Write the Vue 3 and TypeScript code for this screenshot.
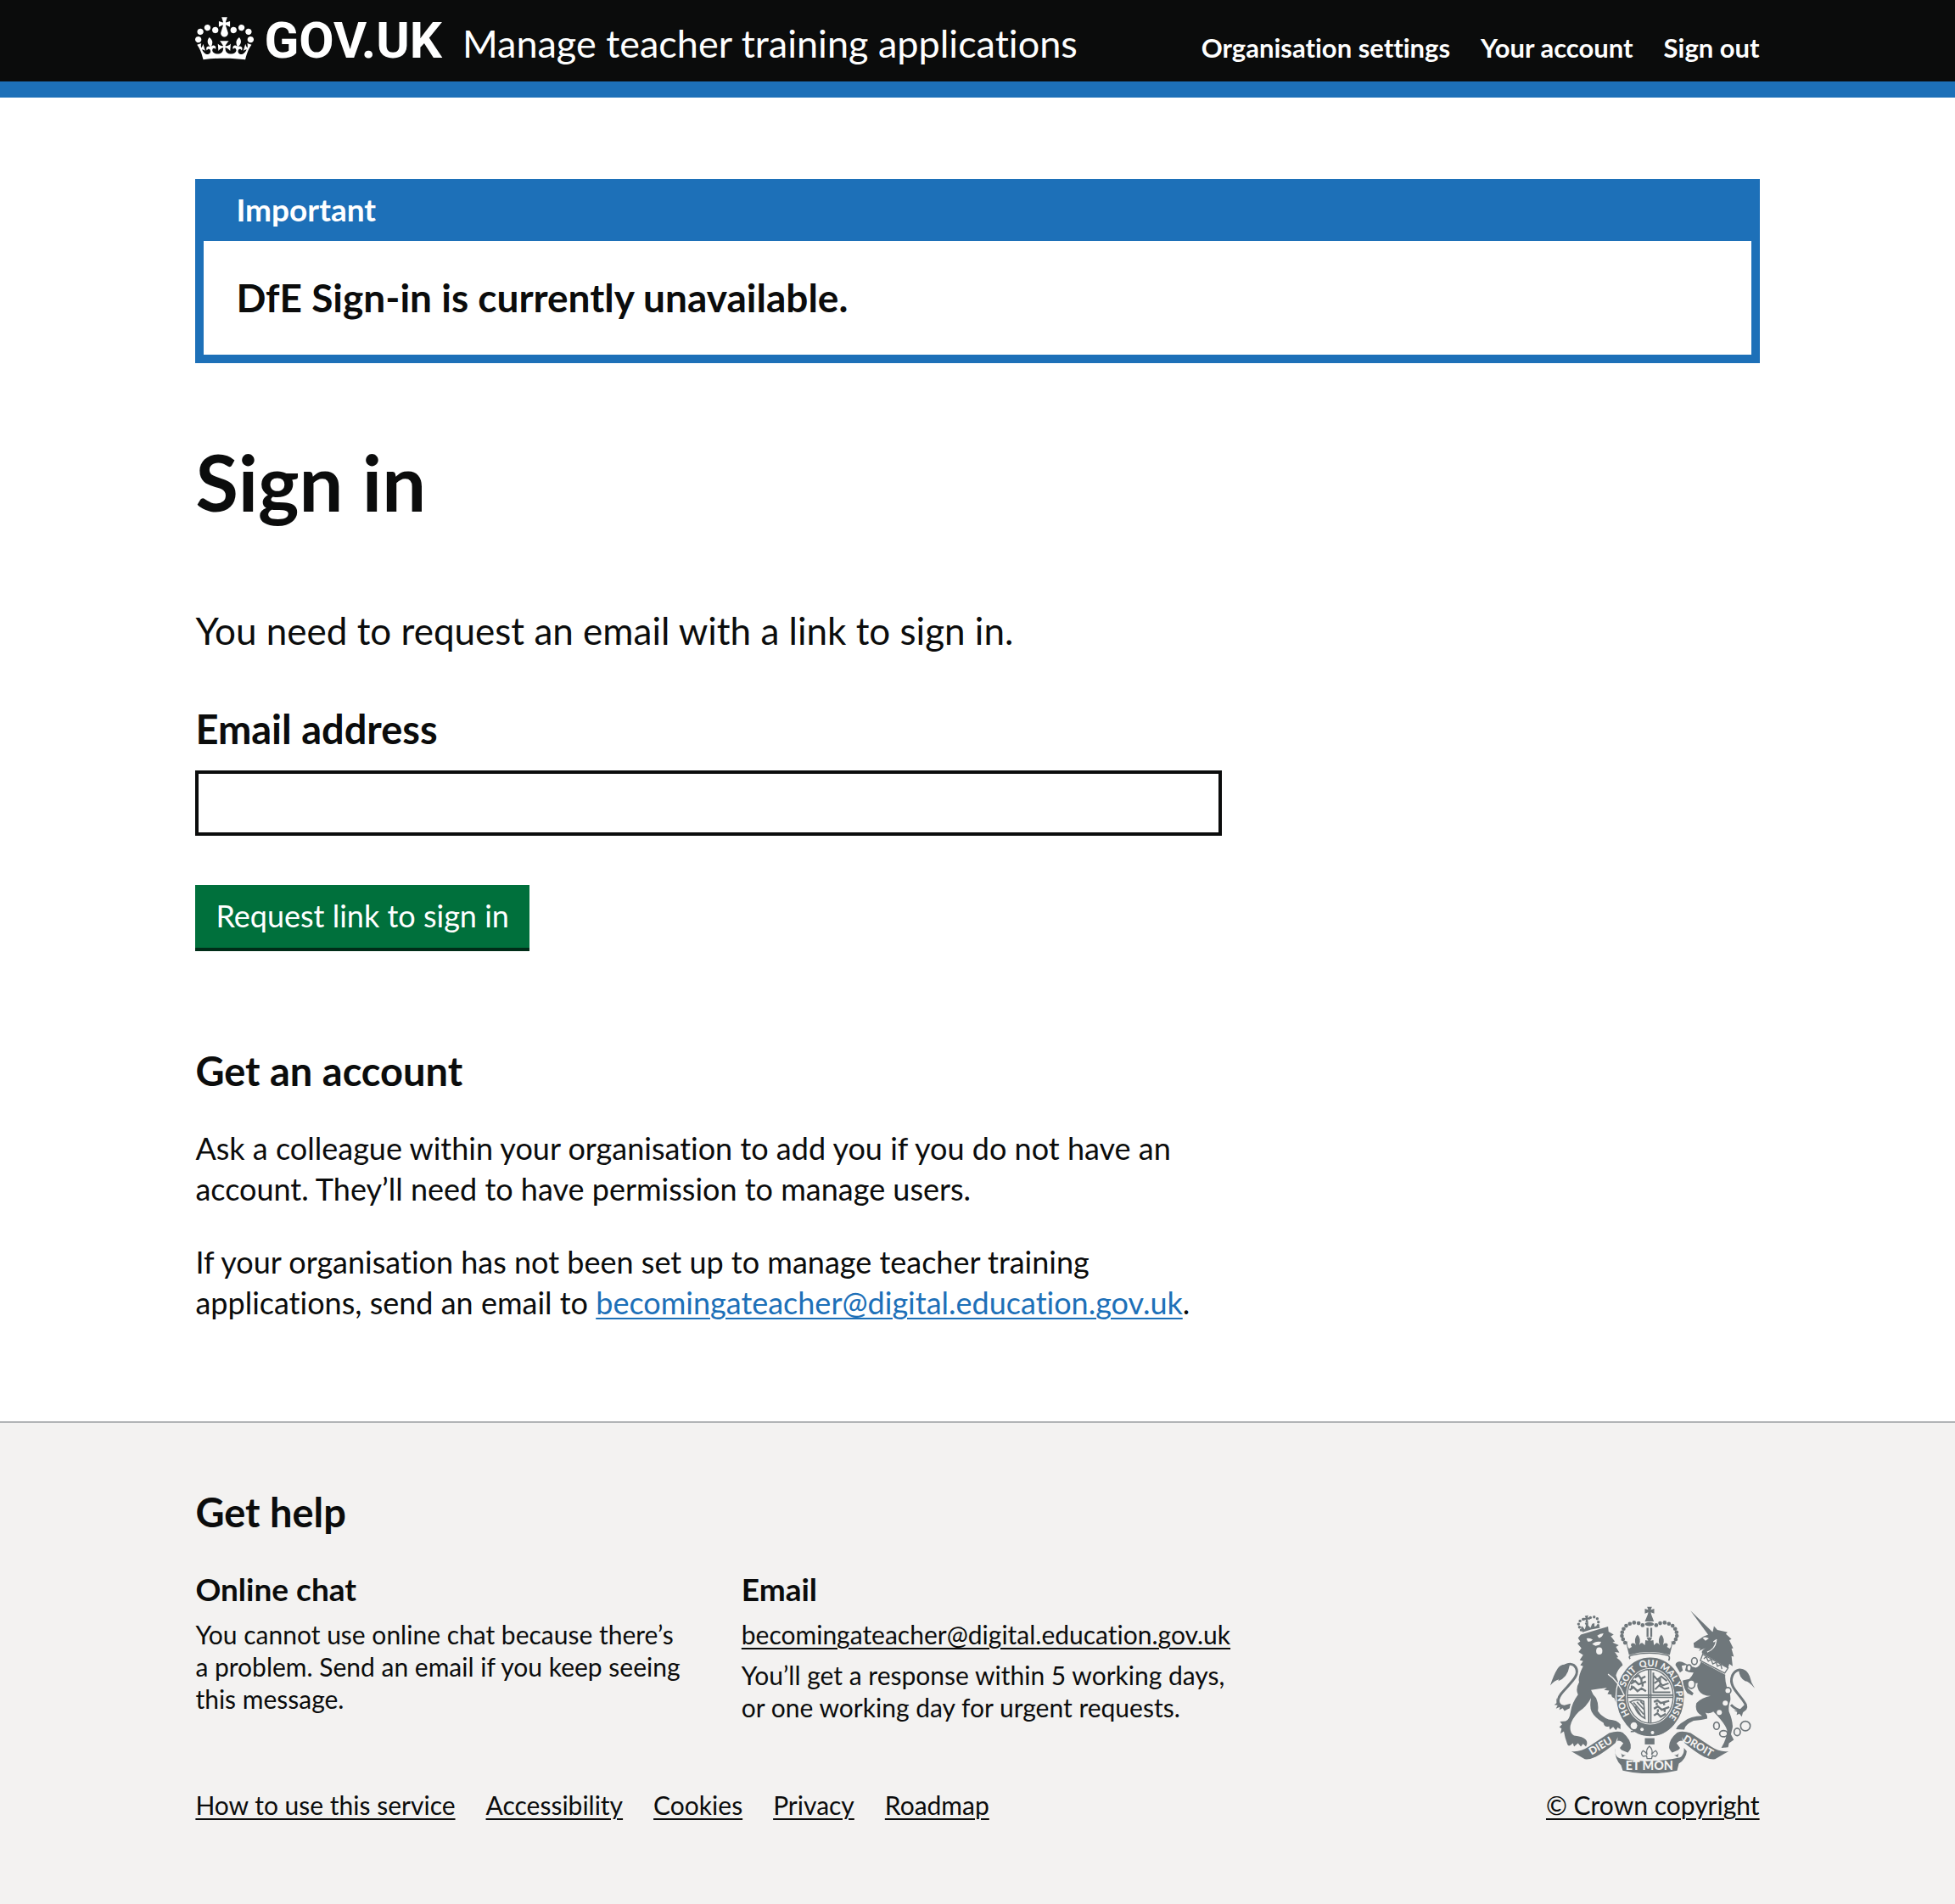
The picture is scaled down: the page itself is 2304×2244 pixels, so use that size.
<script setup lang="ts">
import { ref } from 'vue'

interface Bead {
  x: number
  y: number
}

const email = ref('')
const contact = 'becomingateacher@digital.education.gov.uk'
const navLinks: string[] = ['Organisation settings', 'Your account', 'Sign out']
const metaLinks: string[] = ['How to use this service', 'Accessibility', 'Cookies', 'Privacy', 'Roadmap']

// Pearls along the left arch of the imperial crown; the right arch mirrors them.
const arch: Bead[] = [
  { x: 350, y: 95 }, { x: 336, y: 88 }, { x: 320, y: 86 }, { x: 305, y: 90 }, { x: 292, y: 97 },
  { x: 283, y: 108 }, { x: 278, y: 120 }, { x: 277, y: 133 }, { x: 281, y: 145 }, { x: 288, y: 157 },
]
const pearls: Bead[] = arch.concat(arch.map((b) => ({ x: 748 - b.x, y: b.y })))
const lionPearls: Bead[] = [
  { x: 140, y: 74 }, { x: 129, y: 80 }, { x: 124, y: 91 }, { x: 127, y: 102 }, { x: 133, y: 112 },
  { x: 166, y: 68 }, { x: 179, y: 66 }, { x: 190, y: 72 }, { x: 194, y: 84 }, { x: 193, y: 96 },
]
</script>

<template>
  <div class="page">
    <header class="header">
      <div class="wrap header-row">
        <a href="#" class="logo" aria-label="GOV.UK">
          <svg class="crown" viewBox="0 0 132 97" aria-hidden="true">
            <path fill="currentColor" fill-rule="evenodd" d="M25 30.2c3.5 1.5 7.7-.2 9.1-3.7 1.5-3.6-.2-7.8-3.9-9.2-3.6-1.4-7.6.3-9.1 3.9-1.4 3.5.3 7.5 3.9 9zM9 39.5c3.6 1.5 7.8-.2 9.2-3.7 1.5-3.6-.2-7.8-3.9-9.1-3.6-1.5-7.6.2-9.1 3.8-1.4 3.5.3 7.5 3.8 9zM4.4 57.2c3.5 1.5 7.7-.2 9.1-3.8 1.5-3.6-.2-7.7-3.9-9.1-3.5-1.5-7.6.3-9.1 3.8-1.4 3.5.3 7.6 3.9 9.1zm38.3-21.4c3.5 1.5 7.7-.2 9.1-3.8 1.5-3.6-.2-7.7-3.9-9.1-3.6-1.5-7.6.3-9.1 3.8-1.3 3.6.4 7.7 3.9 9.1zm64.4-5.6c-3.6 1.5-7.8-.2-9.1-3.7-1.5-3.6.2-7.8 3.8-9.2 3.6-1.4 7.7.3 9.2 3.9 1.3 3.5-.4 7.5-3.9 9zm15.9 9.3c-3.6 1.5-7.7-.2-9.1-3.7-1.5-3.6.2-7.8 3.7-9.1 3.6-1.5 7.7.2 9.2 3.8 1.5 3.5-.3 7.5-3.8 9zm4.7 17.7c-3.6 1.5-7.8-.2-9.2-3.8-1.5-3.6.2-7.7 3.9-9.1 3.6-1.5 7.7.3 9.2 3.8 1.3 3.5-.4 7.6-3.9 9.1zM89.3 35.8c-3.6 1.5-7.8-.2-9.2-3.8-1.4-3.6.2-7.7 3.9-9.1 3.6-1.5 7.7.3 9.2 3.8 1.4 3.6-.3 7.7-3.9 9.1zM69.7 17.7l8.9 4.7V9.3l-8.9 2.8c-.2-.3-.5-.6-.9-.9L72.4 0H59.6l3.5 11.2c-.3.3-.6.5-.9.9l-8.8-2.8v13.1l8.8-4.7c.3.3.6.7.9.9l-5 15.4v.1c-.2.8-.4 1.6-.4 2.4 0 4.1 3.1 7.5 7 8.1h.2c.3 0 .7.1 1 .1.4 0 .7 0 1-.1h.2c4-.6 7.1-4.1 7.1-8.1 0-.8-.1-1.7-.4-2.4V34l-5.1-15.4c.4-.2.7-.6 1-.9zM66 92.8c16.9 0 32.8 1.1 47.1 3.2 4-16.9 8.9-26.7 14-33.5l-9.6-3.4c1 4.9 1.1 7.2 0 10.2-1.5-1.4-3-4.3-4.2-8.7L108.6 76c2.8-2 5-3.2 7.5-3.3-4.4 9.4-10 11.9-13.6 11.2-4.3-.8-6.3-4.6-5.6-7.9 1-4.7 5.7-5.9 8-.5 4.3-8.7-3-11.4-7.6-8.8 7.1-7.2 7.9-13.5 2.1-21.1-8 6.1-8.1 12.3-4.5 20.8-4.7-5.4-12.1-2.5-9.5 6.2 3.4-5.2 7.9-2 7.2 3.1-.6 4.3-6.4 7.8-13.5 7.2-10.3-.9-10.9-8-11.2-13.8 2.5-.5 7.1 1.8 11 7.3L80.2 60c-4.1 4.4-8 5.3-12.3 5.4 1.4-4.4 8-11.6 8-11.6H55.5s6.4 7.2 7.9 11.6c-4.2-.1-8-1-12.3-5.4l1.4 16.4c3.9-5.5 8.5-7.7 10.9-7.3-.3 5.8-.9 12.8-11.1 13.8-7.2.6-12.9-2.9-13.5-7.2-.7-5 3.8-8.3 7.1-3.1 2.7-8.7-4.6-11.6-9.4-6.2 3.7-8.5 3.6-14.7-4.6-20.8-5.8 7.6-5 13.9 2.2 21.1-4.7-2.6-11.9.1-7.7 8.8 2.3-5.5 7.1-4.2 8.1.5.7 3.3-1.3 7.1-5.7 7.9-3.5.7-9-1.8-13.5-11.2 2.5.1 4.7 1.3 7.5 3.3l-4.7-15.4c-1.2 4.4-2.7 7.2-4.3 8.7-1.1-3-.9-5.3 0-10.2l-9.5 3.4c5 6.9 9.9 16.7 14 33.5 14.8-2.1 30.8-3.2 47.7-3.2z" />
          </svg>
          <span class="logo-text">GOV.UK</span>
        </a>
        <a href="#" class="service">Manage teacher training applications</a>
        <nav class="nav" aria-label="Account">
          <a v-for="link in navLinks" :key="link" href="#">{{ link }}</a>
        </nav>
      </div>
    </header>

    <main class="wrap main">
      <section class="banner" aria-labelledby="banner-title">
        <h2 id="banner-title" class="banner-title">Important</h2>
        <p class="banner-body">DfE Sign-in is currently unavailable.</p>
      </section>

      <div class="grid">
        <div class="two-thirds">
          <h1 class="title">Sign in</h1>
          <form @submit.prevent>
            <p class="lead">You need to request an email with a link to sign in.</p>
            <label class="label" for="email">Email address</label>
            <input id="email" v-model="email" class="input" type="email" autocomplete="email" />
            <button class="button" type="submit">Request link to sign in</button>
          </form>
          <h2 class="heading">Get an account</h2>
          <p class="body">
            Ask a colleague within your organisation to add you if you do not have an account. They’ll need to have
            permission to manage users.
          </p>
          <p class="body">
            If your organisation has not been set up to manage teacher training applications, send an email to
            <a href="#" class="link">{{ contact }}</a>.
          </p>
        </div>
      </div>
    </main>

    <footer class="footer">
      <div class="wrap footer-row">
        <div class="footer-main">
          <h2 class="heading">Get help</h2>
          <div class="help">
            <section>
              <h3 class="help-title">Online chat</h3>
              <p class="small">You cannot use online chat because there’s a problem. Send an email if you keep seeing this message.</p>
            </section>
            <section>
              <h3 class="help-title">Email</h3>
              <p class="small"><a href="#">{{ contact }}</a></p>
              <p class="small">You’ll get a response within 5 working days, or one working day for urgent requests.</p>
            </section>
          </div>
          <nav class="meta" aria-label="Support links">
            <a v-for="link in metaLinks" :key="link" href="#">{{ link }}</a>
          </nav>
        </div>
        <a href="#" class="copyright">
          <svg class="arms" viewBox="24 28 722 590" aria-hidden="true">
            <g class="ink">
              <!-- lion -->
              <path d="M122 140L132 128L200 108L228 100L230 118L248 128L238 134L252 152L244 156L266 166L256 172L268 192L252 190L264 208L258 210Q276 222 280 236Q262 250 256 272L262 290Q280 320 290 345Q288 362 282 372L274 362L272 374L262 360L256 368L250 352Q240 350 240 340L226 338L232 326L214 324L224 316Q200 318 168 324Q174 342 186 352Q196 375 192 398Q205 418 230 428Q262 430 272 446L272 462L262 456L256 466L246 454L234 464L232 452Q215 458 212 440Q180 420 170 400Q162 385 168 352Q150 385 125 400Q100 425 95 450Q92 475 108 485Q140 488 150 500Q158 510 150 524L140 514L132 524L122 512L108 524L104 512Q88 528 84 514Q75 490 72 470L60 478L64 460L56 455L66 445L58 435L78 434Q92 430 96 400Q100 370 122 340Q112 320 126 296Q120 280 140 240L130 236L140 222L128 218L140 200L124 190L134 176L120 160L130 152Z" />
              <path d="M92 236Q62 228 50 248Q36 270 24 308Q38 290 55 286L52 292Q85 280 92 238Z" />
              <path d="M46 352Q54 378 74 378L96 372L92 388L74 398L68 388L56 394L58 384L44 390L50 378L38 376L46 370Z" />
              <path d="M138 120L134 110Q130 96 138 100L146 110L150 96L146 88L158 84L158 96L166 104L172 90L180 88L180 100L186 98L192 92L200 104L168 110Z" />
              <path d="M146 62L158 60L156 68L163 67L164 76L156 74L158 84L148 86L150 76L143 78L141 69L149 70Z" />
              <!-- imperial crown -->
              <path d="M366 30H383L379 41L391 37V54L379 50L381 58L390 82H358L368 58L370 50L358 54V37L370 41Z" />
              <ellipse cx="374" cy="91" rx="16" ry="7" />
              <path d="M364 104H371V136H364ZM377 104H384V136H377Z" />
              <path d="M298 150Q292 164 302 178L312 172Q304 160 316 158Q324 158 326 166Q318 142 332 128Q346 142 338 166Q342 156 350 158L358 166L360 148L370 150L364 138H384L378 150L388 148L390 166L398 158Q406 156 410 166Q402 142 416 128Q430 142 422 166Q424 158 432 158Q444 160 436 172L446 178Q456 164 450 150L456 158L446 200Q374 180 302 200L292 158Z" />
              <!-- unicorn -->
              <path d="M519 44L598 120L584 132Z" />
              <path d="M532 174L530 158L566 134L588 126L598 118L602 98L614 112L650 120L644 126L664 144L656 148L670 176L664 178L672 206L664 204L668 240L656 232L652 246L560 194Q556 185 572 176L548 186L554 178Z" />
              <path d="M556 224L642 270Q640 290 648 315Q662 335 660 360Q652 380 655 400Q668 430 668 455L662 480L672 500L655 512L652 526L628 528Q650 490 648 465Q640 440 600 400Q585 410 572 404Q580 416 578 425Q560 430 530 432Q500 445 497 464L468 462Q475 445 495 435Q520 415 560 415Q532 400 540 370Q560 350 590 345Q560 345 548 325Q540 310 545 300L520 300Q508 300 510 318L530 335L525 343L508 335Q490 310 492 290L515 285Q525 275 530 262Q510 262 500 255L505 235L488 238L492 255L482 262L466 235Q470 220 490 225L520 240L538 245Q552 240 556 224Z" />
              <path d="M688 252Q715 243 728 275Q732 296 746 318Q725 292 712 292Q690 280 690 252Z" />
              <path d="M714 372L716 392L704 404L700 418L692 408L682 412L684 402L672 396L690 396Z" />
              <!-- ribbon -->
              <path d="M98 540Q130 544 160 524L232 476Q262 466 280 474Q312 500 308 530Q300 548 278 562L270 528L282 512Q270 500 262 504Q220 540 185 560Q165 570 146 568Z" />
              <path d="M654 540Q622 544 592 524L520 476Q490 466 472 474Q440 500 444 530Q452 548 474 562L482 528L470 512Q482 500 490 504Q532 540 567 560Q587 570 606 568Z" />
              <path d="M252 530Q250 558 270 566Q374 586 482 562Q498 552 496 528L506 540Q504 566 478 584L472 608Q374 630 280 608L274 590Q252 570 252 530Z" />
              <path d="M358 494H392V516H358Z" />
            </g>
            <g class="ink">
              <circle v-for="(p, i) in pearls" :key="i" :cx="p.x" :cy="p.y" r="7" />
              <circle v-for="(p, i) in lionPearls" :key="'l' + i" :cx="p.x" :cy="p.y" r="5" />
            </g>
            <g class="line">
              <path stroke-width="9" d="M92 384C50 388 44 362 62 338C88 304 132 274 114 244C106 230 90 230 76 238" />
              <path stroke-width="9" d="M662 376C690 404 722 400 714 376C700 344 652 314 666 276C674 252 694 248 708 258" />
              <path stroke-width="5" d="M306 214Q298 204 312 201Q374 186 436 201Q450 204 442 220" />
            </g>
            <!-- garter and shield -->
            <ellipse class="ink halo" cx="377" cy="348" rx="121" ry="141" />
            <ellipse class="paper" cx="377" cy="346" rx="86" ry="100" />
            <ellipse class="line" cx="377" cy="346" rx="81" ry="95" stroke-width="4" />
            <g class="line">
              <path stroke-width="5" d="M371 250V440M379 250V440M296 342H458M296 350H458" />
              <path stroke-width="7" d="M322 280L336 272L344 284L360 276M308 302L324 292L336 304L362 294M304 324L318 314L332 328L346 318L362 328M316 288V300M346 284V296M312 308V318M350 300V312" />
              <path stroke-width="6" d="M390 274L402 288L416 276L436 292M392 300L406 290L420 308L442 300M394 322L408 308L428 320L444 316M412 280V310M388 262V332H448" />
              <path stroke-width="7" d="M390 366L402 360L414 370L444 362M390 390L404 382L418 394L444 384M390 414L402 406L414 418L432 408M400 368V378M426 366V378M404 392V402M428 390V402" />
              <path stroke-width="5" d="M306 366Q330 352 354 364L358 424Q336 412 328 396Q318 374 306 366ZM318 368L354 410M330 366L354 392M342 364L354 376M324 382L344 414" />
            </g>
            <g class="motto">
              <path id="garter" fill="none" d="M377 452A92 106 0 0 1 377 240A92 106 0 0 1 377 452" />
              <text><textPath href="#garter" startOffset="20%">HON</textPath></text>
              <text><textPath href="#garter" startOffset="36%">SOIT</textPath></text>
              <text><textPath href="#garter" startOffset="49%">QUI</textPath></text>
              <text><textPath href="#garter" startOffset="61%">MAL</textPath></text>
              <text><textPath href="#garter" startOffset="69%">Y</textPath></text>
              <text><textPath href="#garter" startOffset="80%">PENSE</textPath></text>
              <text class="scroll" transform="translate(208 532) rotate(-31)">DIEU</text>
              <text class="scroll" transform="translate(540 532) rotate(30)">DROIT</text>
              <text class="mon" x="374" y="607">ET MON</text>
            </g>
            <g class="paper">
              <circle cx="348" cy="463" r="6" />
              <circle cx="385" cy="474" r="6" />
              <circle cx="642" cy="370" r="9" />
              <circle cx="621" cy="403" r="9" />
              <ellipse cx="197" cy="186" rx="11" ry="13" />
              <path d="M152 142Q164 138 174 146Q166 156 156 152ZM190 132Q200 124 212 124Q208 138 196 140ZM172 162Q184 150 204 154L198 164L184 168ZM562 140Q572 134 584 142L572 150Z" />
              <path d="M262 490Q258 524 276 536L304 548Q284 560 274 548Q258 536 254 512ZM490 490Q494 524 476 536L448 548Q468 560 478 548Q494 536 498 512Z" />
            </g>
            <g class="line">
              <path class="collar" stroke-width="4" d="M562 198L652 246L640 264L554 220Z" />
              <path stroke-width="4" d="M566 214L574 206L582 222L592 216L598 232L610 226L614 240L626 234L630 250" />
              <circle class="paper-fill" cx="320" cy="450" r="15" stroke-width="5" />
              <path stroke-width="5" d="M306 430Q332 432 334 450Q330 474 308 470" />
              <path class="paper-fill" stroke-width="4" d="M374 522Q388 534 382 552Q388 542 396 538Q408 548 396 558L384 556L382 566H366L364 556L352 558Q340 548 352 538Q362 542 366 552Q360 534 374 522Z" />
              <ellipse cx="533" cy="222" rx="10" ry="12" stroke-width="5" />
              <ellipse class="paper-fill" cx="514" cy="246" rx="8" ry="11" stroke-width="5" />
              <ellipse class="paper-fill" cx="522" cy="303" rx="13" ry="15" stroke-width="5" />
              <circle class="paper-fill" cx="651" cy="326" r="11" stroke-width="5" />
              <ellipse cx="611" cy="450" rx="10" ry="13" stroke-width="5" />
              <ellipse cx="636" cy="478" rx="14" ry="11" stroke-width="5" />
              <ellipse cx="684" cy="472" rx="11" ry="13" stroke-width="5" />
              <circle cx="713" cy="451" r="17" stroke-width="5" />
            </g>
            <path class="paper-line" stroke-width="4" d="M228 268Q262 290 286 344M610 150Q606 180 578 190M600 154L612 146" />
          </svg>
          <span>© Crown copyright</span>
        </a>
      </div>
    </footer>
  </div>
</template>

<style>
body {
  margin: 0;
  background: #f3f2f1;
}
</style>

<style scoped>
.page {
  font-family: Lato, "Liberation Sans", sans-serif;
  font-size: 36px;
  line-height: 48px;
  font-variant-ligatures: none;
  color: #0b0c0c;
  background: #fff;
}
h1, h2, h3, p {
  margin: 0;
}
.wrap {
  padding-left: 10%;
  padding-right: 10%;
}
a {
  color: inherit;
  text-underline-offset: 4px;
  text-decoration-thickness: 2px;
}
.header {
  background: #0b0c0c;
  border-bottom: 19px solid #1d70b8;
  color: #fff;
}
.header a {
  text-decoration: none;
}
.header-row {
  display: flex;
  align-items: baseline;
  height: 96px;
}
.logo {
  display: flex;
  align-items: baseline;
  gap: 12px;
  margin-right: 24px;
}
.crown {
  width: 69px;
  height: 51px;
  align-self: flex-start;
  margin-top: 20px;
}
.logo-text {
  font-family: Roboto, sans-serif;
  font-weight: 700;
  font-size: 60px;
  line-height: 96px;
}
.service {
  font-size: 45px;
}
.nav {
  display: flex;
  gap: 36px;
  margin-left: auto;
  font-size: 31px;
  font-weight: 700;
}
.main {
  padding-top: 96px;
  padding-bottom: 116px;
}
.banner {
  border: 10px solid #1d70b8;
  border-top: 0;
}
.banner-title {
  padding: 12px 38px 13px;
  background: #1d70b8;
  color: #fff;
  font-size: 37px;
  line-height: 48px;
}
.banner-body {
  padding: 38px;
  font-size: 46px;
  line-height: 58px;
  font-weight: 700;
}
.grid {
  display: grid;
  grid-template-columns: repeat(3, 1fr);
  column-gap: 58px;
}
.two-thirds {
  grid-column: span 2;
}
.title {
  margin-top: 92px;
  font-size: 92px;
  line-height: 96px;
}
.lead {
  margin-top: 98px;
  font-size: 44px;
  line-height: 58px;
}
.label {
  display: block;
  margin-top: 58px;
  font-size: 47px;
  line-height: 58px;
  font-weight: 700;
}
.input {
  display: block;
  box-sizing: border-box;
  width: 100%;
  height: 77px;
  margin-top: 20px;
  padding: 8px;
  border: 4px solid #0b0c0c;
  border-radius: 0;
  background: #fff;
  font: inherit;
}
.button {
  display: block;
  margin-top: 58px;
  padding: 12px 24px 14px;
  border: 0;
  box-shadow: 0 4px 0 #002d18;
  background: #00703c;
  color: #fff;
  font: inherit;
}
.heading {
  font-size: 47px;
  line-height: 58px;
}
.two-thirds .heading {
  margin-top: 116px;
}
.body {
  margin-top: 38px;
}
.link {
  color: #1d70b8;
}
.footer {
  padding: 76px 0 92px;
  border-top: 2px solid #b1b4b6;
  background: #f3f2f1;
}
.footer-row {
  display: flex;
  align-items: flex-end;
  justify-content: space-between;
}
.footer-main {
  flex: 0 0 66.667%;
}
.help {
  display: grid;
  grid-template-columns: 1fr 1fr;
  column-gap: 58px;
  margin-top: 38px;
}
.help section {
  min-width: 0;
}
.help-title {
  font-size: 37px;
  line-height: 48px;
  margin-bottom: 10px;
}
.small {
  font-size: 30px;
  line-height: 38px;
}
.small + .small {
  margin-top: 10px;
}
.meta {
  display: flex;
  gap: 36px;
  margin-top: 77px;
  font-size: 30px;
  line-height: 38px;
}
.copyright {
  display: flex;
  flex-direction: column;
  align-items: center;
  gap: 18px;
  font-size: 30px;
  line-height: 38px;
}
.arms {
  width: 241px;
  height: 197px;
}
.ink {
  fill: #6f777b;
}
.halo {
  stroke: #f3f2f1;
  stroke-width: 4px;
}
.paper,
.paper-fill,
.collar {
  fill: #f3f2f1;
}
.line {
  stroke: #6f777b;
}
.line:not(g),
.line path:not(.paper-fill):not(.collar),
.line ellipse:not(.paper-fill),
.line circle:not(.paper-fill) {
  fill: none;
}
.paper-line {
  fill: none;
  stroke: #f3f2f1;
}
.motto {
  fill: #f3f2f1;
  font-family: Lato, sans-serif;
  font-weight: 900;
  font-size: 32px;
  text-anchor: middle;
}
.scroll {
  font-size: 37px;
}
.mon {
  font-size: 43px;
}
</style>
